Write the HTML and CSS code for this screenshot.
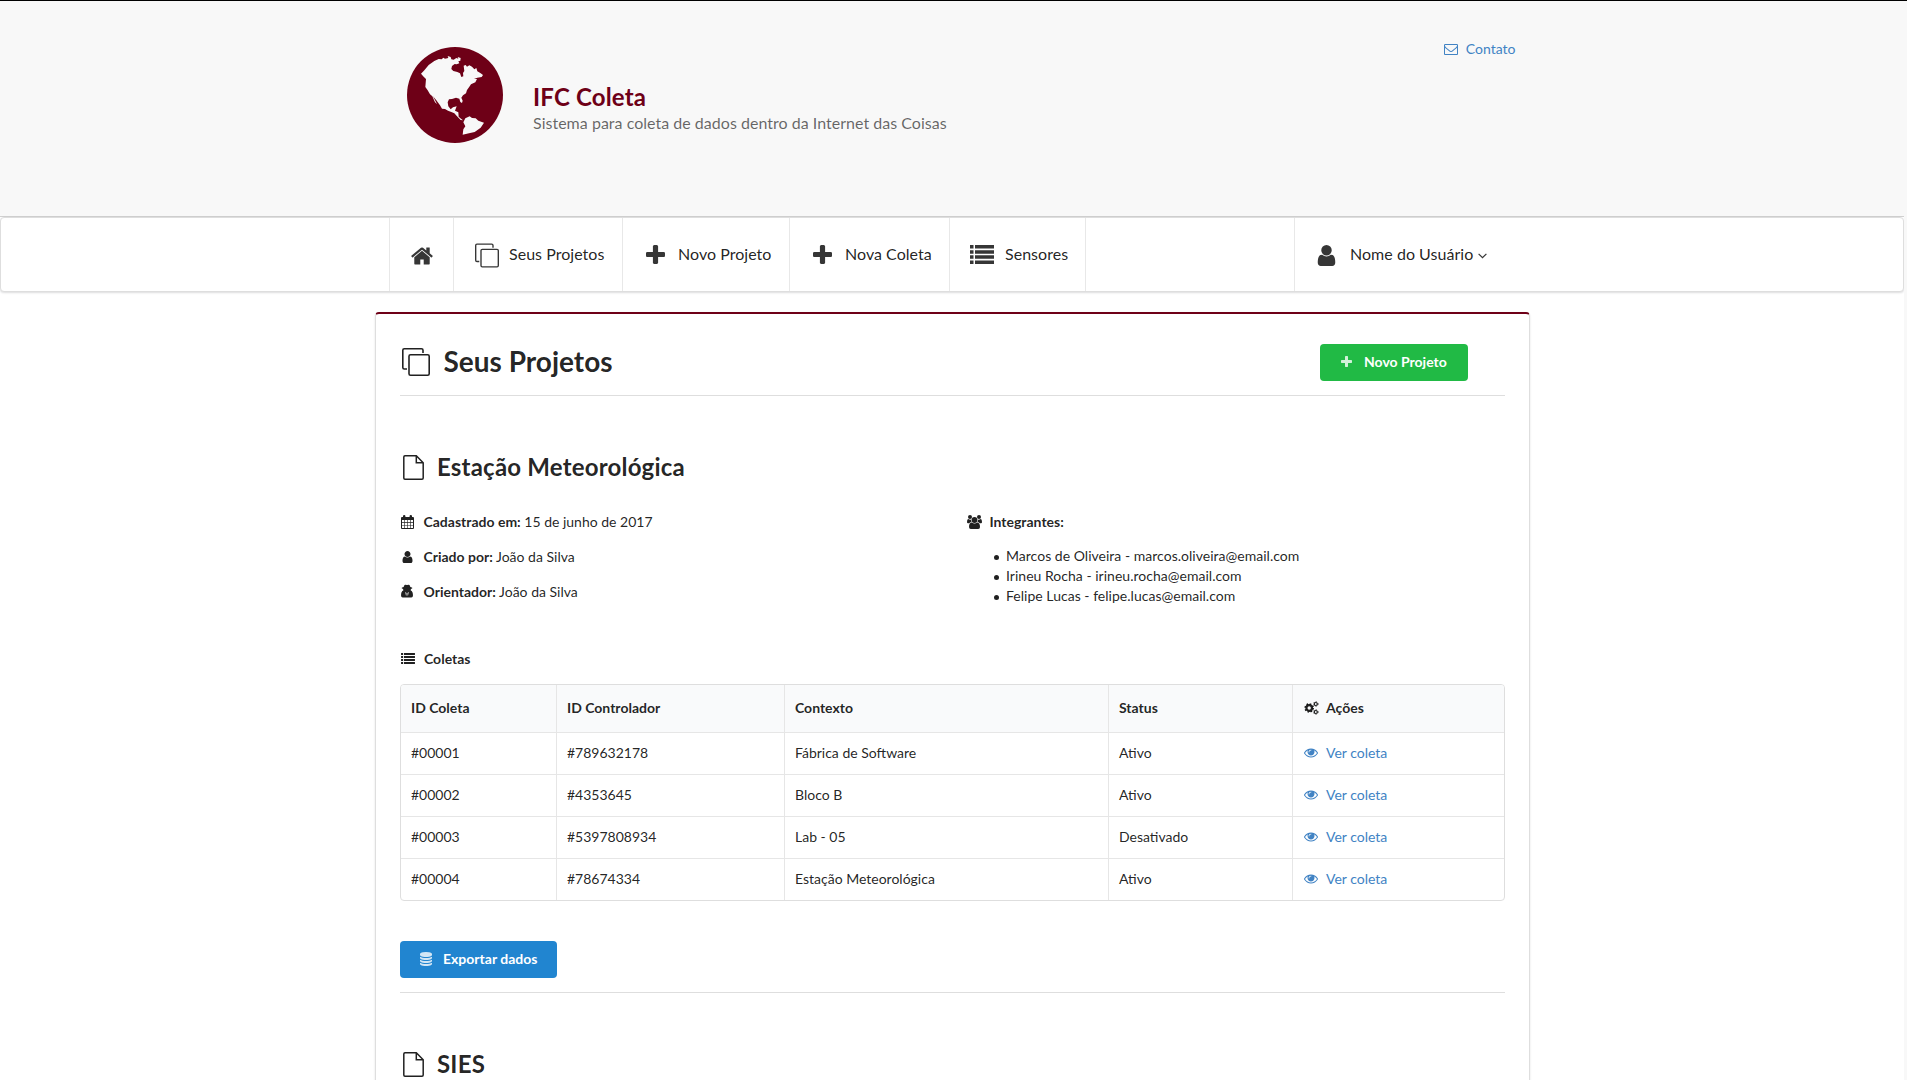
FILE: index.html
```html
<!DOCTYPE html>
<html lang="pt-BR">
<head>
<meta charset="utf-8">
<title>IFC Coleta</title>
<link rel="stylesheet" href="styles.css">
</head>
<body>
<svg class="defs" aria-hidden="true">
  <symbol id="home" viewBox="0 0 1792 1792"><path d="M1472 992v480q0 26-19 45t-45 19h-384v-384h-256v384h-384q-26 0-45-19t-19-45v-480q0-1 .5-3t.5-3l575-474 575 474q1 2 1 6zm223-69l-62 74q-8 9-21 11h-3q-13 0-21-7l-692-577-692 577q-12 8-24 7-13-2-21-11l-62-74q-8-10-7-23.5t11-21.5l719-599q32-26 76-26t76 26l244 204v-195q0-14 9-23t23-9h192q14 0 23 9t9 23v408l219 182q10 8 11 21.5t-7 23.5z"/></symbol>
  <symbol id="plus" viewBox="192 128 1408 1408"><path d="M1600 736v192q0 40-28 68t-68 28h-416v416q0 40-28 68t-68 28h-192q-40 0-68-28t-28-68v-416h-416q-40 0-68-28t-28-68v-192q0-40 28-68t68-28h416v-416q0-40 28-68t68-28h192q40 0 68 28t28 68v416h416q40 0 68 28t28 68z"/></symbol>
  <symbol id="mail" viewBox="0 256 1792 1408"><path d="M1664 1504v-768q-32 36-69 66-268 206-426 338-51 43-83 67t-86.5 48.5-102.500 24.500h-2q-48 0-102.500-24.500t-86.500-48.500-83-67q-158-132-426-338-37-30-69-66v768q0 13 9.500 22.500t22.500 9.500h1472q13 0 22.500-9.500t9.500-22.500zm0-1051v-24.500l-.5-13-3-12.500-5.500-9-9-7.500-14-2.500h-1472q-13 0-22.500 9.500t-9.500 22.500q0 168 147 284 193 152 401 317 6 5 35 29.500t46 37.500 44.500 31.500 50.500 27.500 43 9h2q20 0 43-9t50.500-27.500 44.500-31.500 46-37.500 35-29.500q208-165 401-317 54-43 100.500-115.500t46.500-131.500zm128-37v1088q0 66-47 113t-113 47h-1472q-66 0-113-47t-47-113v-1088q0-66 47-113t113-47h1472q66 0 113 47t47 113z"/></symbol>
  <symbol id="user" viewBox="256 128 1280 1536"><path d="M1536 1399q0 109-62.500 187t-150.500 78h-854q-88 0-150.500-78t-62.500-187q0-85 8.500-160.500t31.500-152 58.500-131 94-89 134.500-34.500q131 128 313 128t313-128q76 0 134.500 34.500t94 89 58.500 131 31.500 152 8.500 160.500zm-256-887q0 159-112.500 271.500t-271.500 112.500-271.500-112.500-112.500-271.500 112.500-271.500 271.500-112.500 271.500 112.500 112.500 271.500z"/></symbol>
  <symbol id="eye" viewBox="0 384 1792 1152"><path d="M1664 960q-152-236-381-353 61 104 61 225 0 185-131.500 316.500t-316.500 131.500-316.500-131.500-131.500-316.500q0-121 61-225-229 117-381 353 133 205 333.500 326.500t434.500 121.500 434.500-121.500 333.500-326.500zm-720-384q0-20-14-34t-34-14q-125 0-214.500 89.500t-89.500 214.500q0 20 14 34t34 14 34-14 14-34q0-86 61-147t147-61q20 0 34-14t14-34zm848 384q0 34-20 69-140 230-376.500 368.500t-499.500 138.500-499.500-139-376.500-368q-20-35-20-69t20-69q140-229 376.500-368t499.500-139 499.500 139 376.500 368q20 35 20 69z"/></symbol>
  <symbol id="database" viewBox="128 0 1536 1792"><path d="M896 768q237 0 443-43t325-127v170q0 69-103 128t-280 93.500-385 34.500-385-34.500-280-93.500-103-128v-170q119 84 325 127t443 43zm0 768q237 0 443-43t325-127v170q0 69-103 128t-280 93.500-385 34.500-385-34.500-280-93.500-103-128v-170q119 84 325 127t443 43zm0-384q237 0 443-43t325-127v170q0 69-103 128t-280 93.500-385 34.500-385-34.500-280-93.500-103-128v-170q119 84 325 127t443 43zm0-1152q208 0 385 34.500t280 93.500 103 128v128q0 69-103 128t-280 93.500-385 34.500-385-34.500-280-93.500-103-128v-128q0-69 103-128t280-93.500 385-34.500z"/></symbol>
  <symbol id="copy" viewBox="0 0 28 28"><path fill="none" stroke="currentColor" stroke-width="1.600" d="M21 5V2.300q0-1.500-1.500-1.500H2.300Q.8.800.8 2.300v17.200q0 1.500 1.500 1.500H5M8.500 6.800h17.200q1.500 0 1.500 1.500v17.400q0 1.500-1.500 1.500H8.500q-1.500 0-1.500-1.500V8.300q0-1.500 1.500-1.500z"/></symbol>
  <symbol id="file" viewBox="0 0 21 25"><path fill="none" stroke="currentColor" stroke-width="1.500" d="M13.300.8H2Q.8.800.8 2v21q0 1.200 1.200 1.200h17q1.200 0 1.200-1.200V7.700zv7h7"/></symbol>
  <symbol id="list" viewBox="0 0 24 19"><path d="M0 0h3.500v3.500H0zM5 0h19v3.500H5zM0 5.200h3.500v3.500H0zM5 5.200h19v3.500H5zM0 10.300h3.500v3.500H0zM5 10.300h19v3.500H5zM0 15.500h3.500V19H0zM5 15.500h19V19H5z"/></symbol>
  <symbol id="calendar" viewBox="0 0 13 14"><path fill-rule="evenodd" d="M1 2h1V1q0-1 1.200-1T4.400 1v1h4.200V1q0-1 1.200-1T11 1v1h1q1 0 1 1v10q0 1-1 1H1q-1 0-1-1V3q0-1 1-1zm0 3v2.300h2.300V5zm2.900 0v2.300h2.300V5zm2.900 0v2.300h2.300V5zm2.900 0v2.300H12V5zM1 7.900v2.300h2.300V7.900zm2.900 0v2.300h2.300V7.900zm2.900 0v2.300h2.300V7.900zm2.900 0v2.300H12V7.900zM1 10.800V13h2.300v-2.200zm2.900 0V13h2.300v-2.200zm2.900 0V13h2.300v-2.200zm2.900 0V13H12v-2.200z"/></symbol>
  <symbol id="secret" viewBox="0 0 12 13"><path fill-rule="evenodd" d="M2.600 2.500L3.500.5Q4 0 5 .2q1 .5 2 0 1-.2 1.500.3l.9 2q2 .3 2 1 0 .6-1.500.9l-.2 1.500 1 .5Q12 7.600 12 10.700q0 2.300-1.700 2.300H1.700Q0 13 0 10.700 0 7.600 1.300 6.400l1-.5-.2-1.500Q.6 4.100.6 3.500q0-.7 2-1zM4.300 7.600l.8 4.200.5-2.600-.5-1.200zm3.400 0l-.8.400-.5 1.200.5 2.600z"/></symbol>
  <symbol id="users" viewBox="0 0 15 14"><circle cx="3" cy="2" r="2"/><circle cx="12" cy="2" r="2"/><path d="M0 7q0-3 1.300-3Q3 5 4.200 4.400 3.800 6 4.600 7.100 3 7.200 2.300 8.200H1Q0 8.200 0 7zM15 7q0-3-1.300-3Q12 5 10.800 4.400q.4 1.600-.4 2.700 1.600.1 2.300 1.100H14q1 0 1-1.200z"/><circle cx="7.500" cy="5" r="2.900"/><path d="M2 12q0-4.500 2.800-4.500 2.700 1.800 5.400 0Q13 7.500 13 12q0 2-1.800 2H3.800Q2 14 2 12z"/></symbol>
  <symbol id="cogs" viewBox="0 0 14 14"><circle cx="4.700" cy="7" r="2.800" fill="none" stroke="currentColor" stroke-width="2.200"/><circle cx="4.700" cy="7" r="4.100" fill="none" stroke="currentColor" stroke-width="1.400" stroke-dasharray="1.610 1.610"/><g fill="none" stroke="currentColor"><circle cx="11.300" cy="3" r="1.500" stroke-width="1.200"/><circle cx="11.300" cy="3" r="2.300" stroke-width=".8" stroke-dasharray="1.200"/><circle cx="11.300" cy="11" r="1.500" stroke-width="1.200"/><circle cx="11.300" cy="11" r="2.300" stroke-width=".8" stroke-dasharray="1.200"/></g></symbol>
</svg>
<header class="header">
  <div class="brand">
    <svg class="globe" viewBox="12 12 288 288"><circle cx="156" cy="156" r="144" fill="#6e0017"/><path fill="#f8f8f8" d="M54 92L64 82 77 66 94 54 107 48 116 49 121 44 126 47 136 45 134 39 143 42 145 49 152 50 160 45 166 47 164 42 173 45 172 53 166 55 169 61 161 64 155 63 147 69 145 78 151 84 163 87 171 91 175 102 181 100 180 90 184 84 182 68 188 66 192 71 199 67 207 71 214 79 220 75 223 85 233 91 240 96 236 102 223 104 213 108 222 108 217 118 204 124 198 133 192 141 189 151 180 157 175 164 179 173 177 180 172 177 169 167 159 164 147 168 138 169 134 178 136 190 143 199 150 193 161 190 156 203 166 208 167 221 174 227 180 232 173 231 162 220 154 211 145 207 135 203 126 198 117 197 111 187 100 172 90 160 100 179 103 184 96 178 88 160 81 154 74 142 67 132 69 108 62 101zM181 238L187 226 200 220 207 225 218 226 226 233 243 239 233 254 215 267 198 271 179 275 181 259 187 250z"/></svg>
    <div class="brand-text"><h1>IFC Coleta</h1><p>Sistema para coleta de dados dentro da Internet das Coisas</p></div>
    <a class="contact"><svg class="i-mail"><use href="#mail"/></svg>Contato</a>
  </div>
</header>
<nav class="menu">
  <div class="menu-inner">
    <a class="item home"><svg class="i-home"><use href="#home"/></svg></a>
    <a class="item projects"><svg class="i-copy"><use href="#copy"/></svg>Seus Projetos</a>
    <a class="item new-project"><svg class="i-plus"><use href="#plus"/></svg>Novo Projeto</a>
    <a class="item new-coleta"><svg class="i-plus"><use href="#plus"/></svg>Nova Coleta</a>
    <a class="item sensors"><svg class="i-list"><use href="#list"/></svg>Sensores</a>
    <a class="item account"><svg class="i-user"><use href="#user"/></svg>Nome do Usuário<svg class="i-caret" viewBox="0 0 9 6"><path d="M.6.800l3.900 3.900L8.400.800" fill="none" stroke="currentColor" stroke-width="1.200"/></svg></a>
  </div>
</nav>
<main class="card">
  <div class="card-head">
    <h2 class="title"><svg class="i-copy-lg"><use href="#copy"/></svg>Seus Projetos</h2>
    <button class="btn green"><svg class="i-plus-sm"><use href="#plus"/></svg>Novo Projeto</button>
  </div>
  <section class="project">
    <h3><svg class="i-file"><use href="#file"/></svg>Estação Meteorológica</h3>
    <div class="info">
      <div class="facts">
        <p><svg class="i-cal"><use href="#calendar"/></svg><b>Cadastrado em:</b>&nbsp;15 de junho de 2017</p>
        <p><svg class="i-person"><use href="#user"/></svg><b>Criado por:</b>&nbsp;João da Silva</p>
        <p><svg class="i-secret"><use href="#secret"/></svg><b>Orientador:</b>&nbsp;João da Silva</p>
      </div>
      <div class="members">
        <p><svg class="i-users"><use href="#users"/></svg><b>Integrantes:</b></p>
        <ul>
          <li>Marcos de Oliveira - marcos.oliveira@email.com</li>
          <li>Irineu Rocha - irineu.rocha@email.com</li>
          <li>Felipe Lucas - felipe.lucas@email.com</li>
        </ul>
      </div>
    </div>
    <p class="label"><svg class="i-list-sm"><use href="#list"/></svg><b>Coletas</b></p>
    <table>
      <colgroup><col class="c1"><col class="c2"><col class="c3"><col class="c4"><col class="c5"></colgroup>
      <thead><tr><th>ID Coleta</th><th>ID Controlador</th><th>Contexto</th><th>Status</th><th><span class="cell"><svg class="i-cogs"><use href="#cogs"/></svg>Ações</span></th></tr></thead>
      <tbody>
        <tr><td>#00001</td><td>#789632178</td><td>Fábrica de Software</td><td>Ativo</td><td><a class="cell"><svg class="i-eye"><use href="#eye"/></svg>Ver coleta</a></td></tr>
        <tr><td>#00002</td><td>#4353645</td><td>Bloco B</td><td>Ativo</td><td><a class="cell"><svg class="i-eye"><use href="#eye"/></svg>Ver coleta</a></td></tr>
        <tr><td>#00003</td><td>#5397808934</td><td>Lab - 05</td><td>Desativado</td><td><a class="cell"><svg class="i-eye"><use href="#eye"/></svg>Ver coleta</a></td></tr>
        <tr><td>#00004</td><td>#78674334</td><td>Estação Meteorológica</td><td>Ativo</td><td><a class="cell"><svg class="i-eye"><use href="#eye"/></svg>Ver coleta</a></td></tr>
      </tbody>
    </table>
    <button class="btn blue"><svg class="i-db"><use href="#database"/></svg>Exportar dados</button>
  </section>
  <section class="project">
    <h3><svg class="i-file"><use href="#file"/></svg>SIES</h3>
  </section>
</main>
</body>
</html>
```
FILE: styles.css
```css
* { box-sizing: border-box; margin: 0; padding: 0; }
html { background: #f8f8f8; }
body {
  width: calc(100% - 3px);
  height: 1080px;
  overflow: hidden;
  background: #fff;
  color: rgba(0, 0, 0, .87);
  font: 14px/20px Lato, sans-serif;
}
html { overflow: hidden; border-top: 1px solid #000; height: 1080px; }
svg { flex: none; fill: currentColor; }
.defs { display: none; }
a { color: #4183c4; }

.header { height: 216px; background: #f8f8f8; border-bottom: 1px solid #d0d0d0; }
.brand { display: flex; width: 1127px; margin: 0 auto; padding: 46px 0 0 18.500px; }
.globe { width: 96px; height: 96px; }
.brand-text { flex: 1; padding: 35px 0 0 30px; }
.brand h1 { color: #6e0017; font-size: 24px; line-height: 30px; letter-spacing: .17px; }
.brand p { color: rgba(0, 0, 0, .6); font-size: 16px; line-height: 22px; letter-spacing: .02px; }
.contact { display: flex; align-items: center; height: 20px; margin-top: -8px; }
.i-mail { width: 14px; height: 11px; margin-right: 8px; }

.menu {
  height: 75px;
  background: #fff;
  border: 1px solid #dedede;
  border-radius: 4px;
  box-shadow: 0 1px 2px rgba(34, 36, 38, .15);
}
.menu-inner { display: flex; width: 1126px; height: 100%; margin: 0 auto; }
.item { display: flex; align-items: center; border-right: 1px solid #e8e8e8; padding-bottom: 2px; color: rgba(0, 0, 0, .87); font-size: 16px; letter-spacing: .03px; }
.item svg { opacity: .9; }
.home { width: 65px; border-left: 1px solid #e8e8e8; padding-left: 20px; }
.projects { width: 169px; padding-left: 21px; }
.new-project { width: 167px; padding-left: 23px; }
.new-coleta { width: 160px; padding-left: 23px; }
.sensors { width: 136px; padding-left: 20px; }
.account { margin-left: auto; width: 221px; border-right: 0; border-left: 1px solid #e8e8e8; padding-left: 22px; }
.i-home { width: 24px; height: 24px; margin-top: 4px; }
.i-copy { width: 24px; height: 25px; margin: 4px 10px 0 0; }
.i-plus { width: 19px; height: 19px; margin: 2px 13px 0 0; }
.i-list { width: 24px; height: 19px; margin: 2px 11px 0 0; }
.i-user { width: 19px; height: 21px; margin: 4px 14px 0 0; }
.i-caret { width: 9px; height: 6px; margin: 4px 0 0 5px; }

.card {
  width: 1155px;
  height: 800px;
  margin: 20px auto 0;
  padding: 0 24px;
  border: 1px solid #dedede;
  border-top: 2px solid #6e0017;
  border-radius: 4px;
  box-shadow: 0 1px 2px rgba(34, 36, 38, .15);
}
.card-head { display: flex; justify-content: space-between; align-items: center; height: 82px; padding: 30px 37px 14px 0; border-bottom: 1px solid #dedede; }
.title { display: flex; align-items: center; font-size: 28px; line-height: 34px; margin-top: -4px; }
.i-copy-lg { width: 28px; height: 28px; margin: 3px 14px 0 2px; }
.btn { display: flex; align-items: center; height: 37px; padding-bottom: 2px; border: 0; border-radius: 4px; color: #fff; font: 700 14px/20px Lato, sans-serif; }
.btn svg { opacity: .8; }
.green { width: 148px; padding-left: 21px; background: #21ba45; }
.blue { width: 157px; padding-left: 20px; background: #2185d0; margin: 40px 0 14px; }
.i-plus-sm { width: 11px; height: 11px; margin: 0 12.500px 0 0; }
.i-db { width: 12px; height: 14px; margin: 1px 11.500px 0 0; }

.project { padding-top: 56px; border-bottom: 1px solid #dedede; }
.project:last-child { border-bottom: 0; }
.project h3 { display: flex; align-items: center; height: 30px; font-size: 24px; letter-spacing: .2px; }
.i-file { width: 21px; height: 25px; margin: 1px 13.500px 0 3px; }
.info { display: flex; margin-top: 30px; height: 94px; }
.info p, .label { display: flex; align-items: center; height: 20px; }
.facts { display: flex; flex-direction: column; gap: 15px; width: 566px; }
.members ul { margin-top: 14px; padding-left: 40px; list-style: none; }
.members li { display: flex; align-items: center; letter-spacing: .02px; }
.members li::before { content: ""; width: 5px; height: 5px; margin: 3px 7px 0 -11.500px; border-radius: 50%; background: currentColor; }
.i-cal { width: 13px; height: 14px; margin: 0 10px 0 1px; }
.i-person { width: 11px; height: 12px; margin: 0 11px 0 2px; }
.i-secret { width: 12px; height: 14px; margin: -2px 10.500px 0 1.500px; }
.i-users { width: 15px; height: 14px; margin: 0 8px 0 1px; }
.label { margin: 43px 0 15px; }
.i-list-sm { width: 14px; height: 11px; margin: -1px 9.500px 0 1px; }

table { width: 1105px; table-layout: fixed; border: 1px solid #dedede; border-radius: 4px; border-spacing: 0; overflow: hidden; }
.c1 { width: 155px; }
.c2 { width: 228px; }
.c3 { width: 324px; }
.c4 { width: 184px; }
th { height: 47px; background: #f9fafb; text-align: left; }
th, td { padding: 0 0 2px 10.500px; vertical-align: middle; border-left: 1px solid #e6e6e6; }
td { height: 42px; border-top: 1px solid #e6e6e6; }
th:first-child, td:first-child { border-left: 0; }
.cell { display: flex; align-items: center; }
.i-cogs { width: 15px; height: 14px; margin: 0 7px 0 1px; }
.i-eye { width: 14px; height: 10px; margin: 0 8px 0 1px; }
```
